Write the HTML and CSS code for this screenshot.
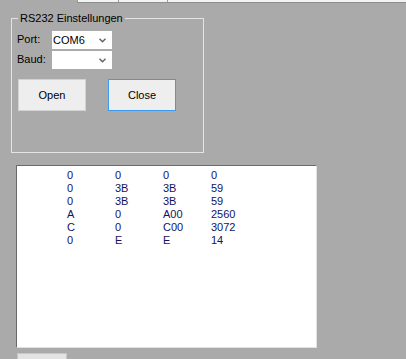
FILE: index.html
```html
<!DOCTYPE html>
<html lang="de">
<head>
    <meta charset="UTF-8">
    <title>RS232</title>
    <link rel="stylesheet" href="styles.css">
</head>
<body>

    <!-- abgeschnittener Tabellenkopf oben -->
    <div class="top-strip">
        <div class="strip-cell cell-a"></div>
        <div class="strip-cell cell-b"></div>
        <div class="strip-cell cell-c"></div>
    </div>

    <fieldset class="settings">
        <legend>RS232 Einstellungen</legend>
        <div class="settings-grid">
            <label>Port:</label>
            <div class="combo">
                <span>COM6</span>
                <svg class="arrow" width="7" height="5" viewBox="0 0 7 5"><polyline points="0.5,0.8 3.5,3.8 6.5,0.8" fill="none" stroke="#606060" stroke-width="1.4"/></svg>
            </div>
            <label>Baud:</label>
            <div class="combo">
                <span></span>
                <svg class="arrow" width="7" height="5" viewBox="0 0 7 5"><polyline points="0.5,0.8 3.5,3.8 6.5,0.8" fill="none" stroke="#606060" stroke-width="1.4"/></svg>
            </div>
        </div>
        <div class="buttons">
            <button class="btn">Open</button>
            <button class="btn btn-focus">Close</button>
        </div>
    </fieldset>

    <div class="listbox">
        <div class="row"><span>0</span><span>0</span><span>0</span><span>0</span></div>
        <div class="row"><span>0</span><span>3B</span><span>3B</span><span>59</span></div>
        <div class="row"><span>0</span><span>3B</span><span>3B</span><span>59</span></div>
        <div class="row"><span>A</span><span>0</span><span>A00</span><span>2560</span></div>
        <div class="row"><span>C</span><span>0</span><span>C00</span><span>3072</span></div>
        <div class="row"><span>0</span><span>E</span><span>E</span><span>14</span></div>
    </div>

    <div class="bottom-btn"></div>

</body>
</html>
```

FILE: styles.css
```css
body {
    margin: 0;
    padding: 0;
    background-color: #aaaaaa;
    font-family: "Liberation Sans", Arial, sans-serif;
    font-size: 11px;
    color: #000;
    width: 406px;
    height: 359px;
    overflow: hidden;
}

/* Tabellenkopf (abgeschnitten) */
.top-strip {
    display: flex;
    margin-left: 77px;
    height: 2px;
    border-bottom: 1px solid #8e8e8e;
}

.strip-cell {
    background-color: #f2f2f2;
    border-left: 1px solid #9c9c9c;
}

.cell-a { width: 40px; }
.cell-b { width: 48px; }
.cell-c { flex: 1; }

/* Gruppenrahmen */
.settings {
    margin: 9px 0 0 11px;
    width: 180px;
    padding: 6px 6px 41px 5px;
    border: 1px solid #e4e4e4;
}

.settings legend {
    margin-left: 1px;
    padding: 0 2px;
    line-height: 13px;
}

.settings-grid {
    display: grid;
    grid-template-columns: 35px 60px;
    row-gap: 2px;
    align-items: center;
}

.settings-grid label {
    padding-bottom: 2px;
}

.combo {
    height: 18px;
    background-color: #fff;
    display: flex;
    align-items: center;
    justify-content: space-between;
    padding: 0 6px 0 1px;
}

.combo span {
    line-height: 13px;
}

.arrow {
    display: block;
    margin-top: 1px;
}

.buttons {
    display: flex;
    gap: 22px;
    margin: 10px 0 0 1px;
}

.btn {
    width: 68px;
    height: 32px;
    background-color: #eeeeee;
    border: 1px solid #d2d2d2;
    font-family: "Liberation Sans", Arial, sans-serif;
    font-size: 11px;
    color: #000;
    padding: 0;
}

.btn-focus {
    border-color: #3d9bef;
}

/* Ausgabeliste */
.listbox {
    margin: 12px 0 0 16px;
    width: 299px;
    height: 178px;
    background-color: #fff;
    border-top: 1px solid #6a6a6a;
    border-left: 1px solid #6a6a6a;
    border-right: 1px solid #e2e2e2;
    border-bottom: 1px solid #e2e2e2;
    padding-top: 3px;
    box-sizing: content-box;
}

.row {
    display: grid;
    grid-template-columns: 48px 48px 48px auto;
    margin-left: 50px;
    line-height: 13px;
    color: #121266;
}

.bottom-btn {
    margin: 5px 0 0 17px;
    width: 48px;
    height: 10px;
    background-color: #e3e3e3;
    border: 1px solid #c6c6c6;
}
```
